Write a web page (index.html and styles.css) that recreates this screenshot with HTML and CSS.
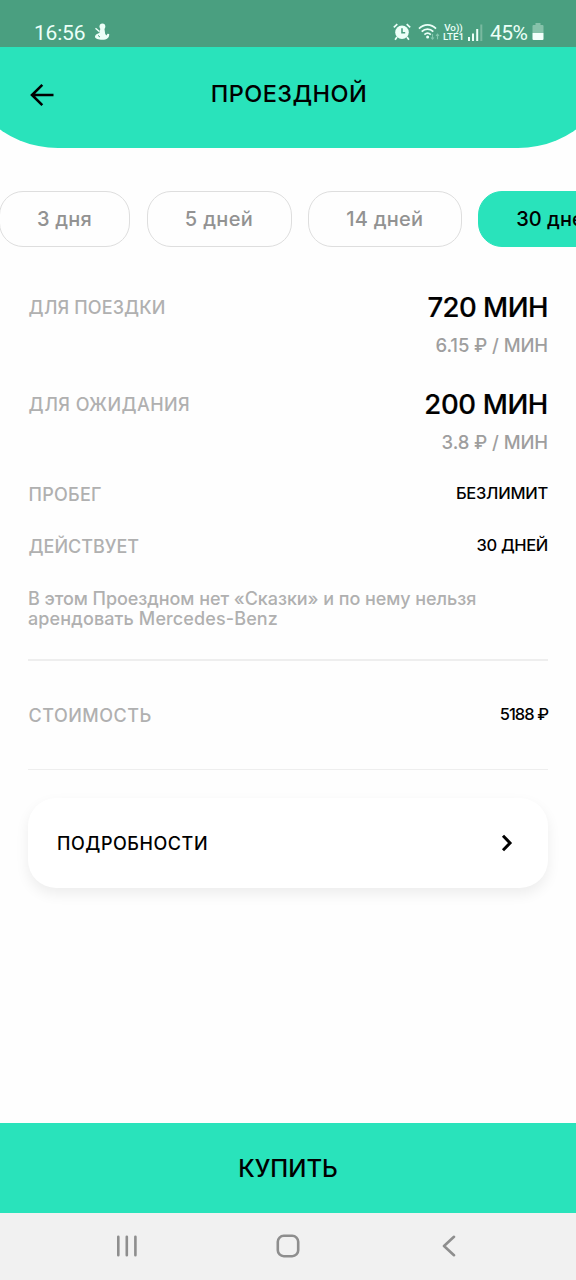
FILE: index.html
```html
<!DOCTYPE html>
<html lang="ru">
<head>
<meta charset="utf-8">
<title>Проездной</title>
<link rel="stylesheet" href="styles.css">
</head>
<body>
<div class="screen">
  <div class="status">
    <span class="status-time">16:56</span>
    <svg class="status-app" width="16" height="18" viewBox="0 0 16 18" fill="#ecfff8"><circle cx="8.4" cy="3.4" r="2.900"/><path d="M6.400 5.500h4l.8 5.500 1.300 1.600 1-1.800 1.700.2c.3 3.700-2.400 5.800-6.800 5.800-4 0-7.400-.9-7.400-3 0-2.300 2.600-3.200 4.400-3.900z"/><path d="M1.500 5.300 5.500 8.600" stroke="#ecfff8" stroke-width="1.400"/><path d="M4 12.400l2 1.700" stroke="#4a9f80" stroke-width="1"/></svg>
    <span class="status-gap"></span>
    <svg class="status-alarm" width="18" height="18" viewBox="0 0 18 18"><circle cx="9" cy="9.300" r="6.800" fill="#ecfff8"/><path d="M9 5.300v4.400h3.200" fill="none" stroke="#4a9f80" stroke-width="1.600"/><path d="M.8 4.400 4.300 1.200M17.200 4.400 13.700 1.200M4 14l-1.900 2.700M14 14l1.900 2.700" stroke="#ecfff8" stroke-width="1.700" fill="none"/></svg>
    <svg class="status-wifi" width="23" height="18" viewBox="0 0 23 18" fill="none" stroke="#ecfff8" stroke-width="1.700"><path d="M1 5.600c4.900-5.100 12.100-5.100 17 0M3.700 8.700c3.400-3.500 8.200-3.500 11.600 0M6.400 11.600c2-1.900 4.400-1.900 6.400 0"/><circle cx="9.600" cy="14" r="1.500" fill="#ecfff8" stroke="none"/><path d="M14.500 11v5M13 14.500l1.500 1.700 1.500-1.700M19.500 16.200v-5M18 12.800l1.500-1.700 1.500 1.700" stroke="#83c8ae" stroke-width="1.100"/></svg>
    <span class="status-lte"><span>Vo))</span><span>LTE1</span></span>
    <svg class="status-signal" width="15" height="17" viewBox="0 0 15 17"><path d="M0 13h2v4H0zM4 9.500h2V17H4zM8.200 5h2v12h-2z" fill="#ecfff8"/><path d="M12.300 0.500h2V17h-2z" fill="#79b99f"/></svg>
    <span class="status-percent">45%</span>
    <svg class="status-battery" width="12" height="18" viewBox="0 0 12 18"><path d="M3.500 0h5v2H10.500q1 0 1 1V10H.5V3q0-1 1-1h2z" fill="#86c2aa"/><path d="M.5 10h11v6q0 1-1 1h-9q-1 0-1-1z" fill="#f3fffb"/></svg>
  </div>
  <header class="header">
    <div class="header-shape"></div>
    <svg class="back" width="26" height="24" viewBox="0 0 26 24" fill="none" stroke="#000" stroke-width="2.600"><path d="M24.500 12H3.500M13.300 1.800 3 12l10.300 10.200"/></svg>
    <h1 class="title">ПРОЕЗДНОЙ</h1>
  </header>
  <div class="chips">
    <span class="chip chip-3">3 дня</span>
    <span class="chip chip-5">5 дней</span>
    <span class="chip chip-14">14 дней</span>
    <span class="chip chip-30">30 дней</span>
  </div>
  <main class="content">
    <section class="row row-tall"><span class="label l-trip">ДЛЯ ПОЕЗДКИ</span><div class="amount"><span class="big b-trip">720 МИН</span><span class="rate r-trip">6.15 ₽ / МИН</span></div></section>
    <section class="row row-wait"><span class="label l-wait">ДЛЯ ОЖИДАНИЯ</span><div class="amount"><span class="big b-wait">200 МИН</span><span class="rate r-wait">3.8 ₽ / МИН</span></div></section>
    <section class="row row-mileage"><span class="label l-mileage">ПРОБЕГ</span><span class="value v-mileage">БЕЗЛИМИТ</span></section>
    <section class="row row-valid"><span class="label l-valid">ДЕЙСТВУЕТ</span><span class="value v-valid">30 ДНЕЙ</span></section>
    <p class="note"><span class="n-first">В этом Проездном нет «Сказки» и по нему нельзя</span><br><span class="n-second">арендовать Mercedes-Benz</span></p>
    <section class="row row-price"><span class="label l-price">СТОИМОСТЬ</span><span class="value v-price">5188 ₽</span></section>
    <div class="card"><span class="card-text">ПОДРОБНОСТИ</span><svg width="12" height="18" viewBox="0 0 12 18" fill="none" stroke="#000" stroke-width="3"><path d="M2 1.800 9 9l-7 7.200"/></svg></div>
  </main>
  <div class="buy"><span class="buy-text">КУПИТЬ</span></div>
  <nav class="nav">
    <svg width="22" height="22" viewBox="0 0 22 22" stroke="#8e8e8e" stroke-width="2.600" stroke-linecap="round"><path d="M2.300 1.800v18.400M10.800 1.800v18.400M19.400 1.800v18.400"/></svg>
    <svg class="nav-home" width="24" height="24" viewBox="0 0 24 24" fill="none" stroke="#8e8e8e" stroke-width="2.600"><rect x="1.800" y="1.800" width="20.400" height="20.400" rx="6"/></svg>
    <svg width="14" height="22" viewBox="0 0 14 22" fill="none" stroke="#8e8e8e" stroke-width="2.600" stroke-linecap="round" stroke-linejoin="round"><path d="M12 1.800 2 11l10 9.200"/></svg>
  </nav>
</div>
</body>
</html>
```
FILE: styles.css
```css
* { box-sizing: border-box; }
body { margin: 0; background: #fefefe; font-family: Inter, "Noto Sans", sans-serif; font-weight: 500; color: #000; }
.screen { width: 576px; height: 1280px; display: flex; flex-direction: column; overflow: hidden; background: #fefefe; white-space: nowrap; }
.screen svg { display: block; flex: none; }

.status { height: 47px; flex: none; display: flex; align-items: flex-start; background: #4a9f80; color: #ecfff8; padding: 23px 32px 0 34px; font: 400 21px/21px Roboto, sans-serif; }
.status-time { width: 60px; letter-spacing: -.2px; }
.status-gap { flex: 1; }
.status-alarm { margin-right: 7px; }
.status-wifi { margin-right: 1px; }
.status-lte { display: flex; flex-direction: column; align-items: center; width: 23px; font: 500 9.800px/9px Roboto, sans-serif; margin-right: 3px; }
.status-signal { margin: 1px 7px 0 0; }
.status-percent { width: 42px; letter-spacing: -.6px; }

.header { height: 101px; flex: none; position: relative; overflow: hidden; display: flex; align-items: center; padding: 0 29px; }
.header-shape { position: absolute; left: -42px; right: -42px; bottom: 0; height: 300px; border-radius: 0 0 100px 100px; background: #29e3bb; }
.back { position: relative; margin-bottom: 6px; }
.title { position: relative; margin: 0 24px 8px 0; flex: 1; text-align: center; font-size: 23.500px; font-weight: 500; line-height: 28px; letter-spacing: .45px; }

.chips { display: flex; gap: 16.500px; height: 56px; margin: 43px 0 0 -1px; flex: none; }
.chip { flex: none; border: 1px solid #dedede; border-radius: 24px; text-align: center; font-size: 20px; line-height: 54px; color: #929292; }
.chip-3 { width: 131px; letter-spacing: .2px; }
.chip-5 { width: 145px; letter-spacing: .35px; }
.chip-14 { width: 153.500px; letter-spacing: .25px; }
.chip-30 { width: 156px; background: #29e3bb; border-color: #29e3bb; color: #000; }

.content { padding: 45px 28px 0; flex: 1; }
.row { display: flex; justify-content: space-between; align-items: flex-start; line-height: 30px; }
.row-tall { height: 97px; }
.row-wait { height: 88px; }
.row-mileage { height: 52px; }
.row-valid { height: 52px; }
.label { font-size: 18px; color: #b0b0b0; margin-top: 1px; padding-left: .5px; }
.l-trip { letter-spacing: .1px; }
.l-wait { letter-spacing: .45px; }
.l-mileage { letter-spacing: .25px; }
.l-price { letter-spacing: .5px; }
.amount { display: flex; flex-direction: column; align-items: flex-end; }
.big { font-size: 27.500px; letter-spacing: -.5px; -webkit-text-stroke: .2px #000; }
.b-wait { letter-spacing: -.35px; }
.rate { font-size: 18.500px; color: #9e9e9e; margin-top: 8px; letter-spacing: -.1px; }
.value { font-size: 16.500px; letter-spacing: -.25px; }
.v-valid { letter-spacing: -.35px; }
.v-price { letter-spacing: -.95px; }
.row-mileage, .row-valid { padding-top: 2px; }
.row-mileage .value, .row-valid .value, .row-price .value { margin-top: -1px; }
.note { margin: 8px 0 30px; font-size: 18px; line-height: 20px; color: #b0b0b0; }
.n-first { letter-spacing: -.06px; }
.n-second { letter-spacing: .12px; }
.row-price { height: 111px; padding-top: 39px; border-top: 2px solid #eee; border-bottom: 1px solid #eee; }
.card { margin-top: 28px; height: 90px; border-radius: 28px; background: #fff; box-shadow: 0 6px 14px rgba(0,0,0,.07); display: flex; align-items: center; justify-content: space-between; padding: 0 35px 0 29px; font-size: 18px; }
.card-text { letter-spacing: .55px; }

.buy { height: 90px; flex: none; background: #29e3bb; display: flex; align-items: center; justify-content: center; font-size: 24px; }
.nav { height: 67px; flex: none; background: #f1f1f1; display: flex; align-items: center; justify-content: space-between; padding: 0 120px 1px 116px; }
.nav-home { margin-right: 4px; }
```
